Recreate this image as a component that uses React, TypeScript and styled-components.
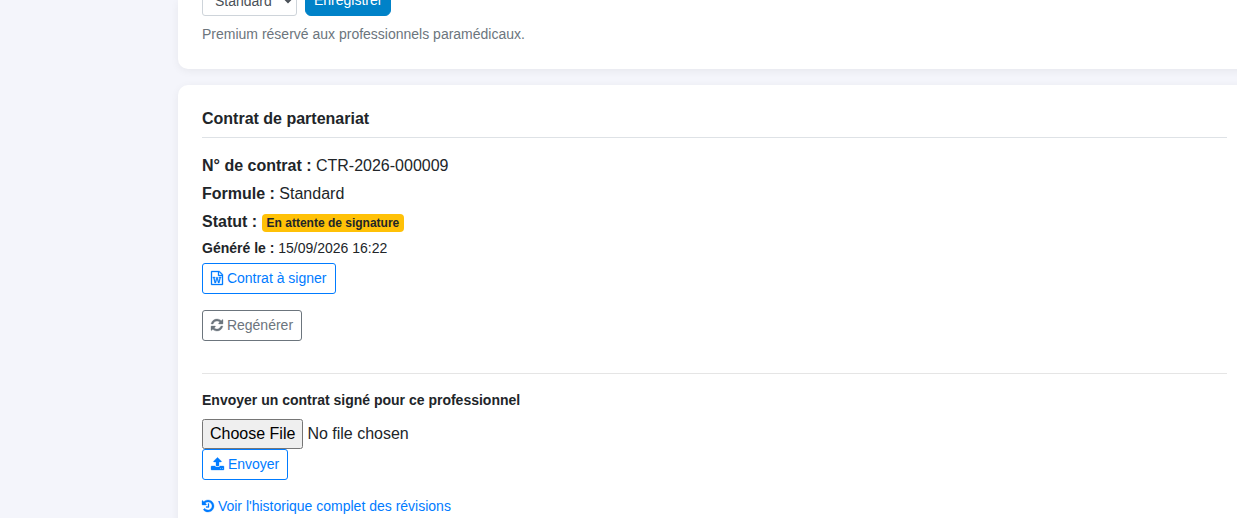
import React from 'react';
import styled, { createGlobalStyle, css } from 'styled-components';

const GlobalStyle = createGlobalStyle`
  *, *::before, *::after { box-sizing: border-box; }
  html { overflow: hidden; }
  body {
    margin: 0;
    background: #f4f5fb;
    color: #212529;
    font: 400 16px/24px "Liberation Sans", Arial, sans-serif;
  }
`;

const Page = styled.div`
  display: grid;
  grid-template-columns: 178px minmax(0, 1fr);
`;

const Main = styled.main`
  display: flex;
  flex-direction: column;
  gap: 16px;
  margin-right: -14px;
`;

const Card = styled.section<{ $continued?: boolean }>`
  padding: ${p => (p.$continued ? '0 24px 24px' : '24px')};
  border-radius: ${p => (p.$continued ? '0 0 10px 10px' : '10px')};
  background: #fff;
  box-shadow: 0 2px 8px rgba(0, 0, 0, 0.06);
`;

const PlanForm = styled.form`
  display: flex;
  gap: 8px;
  margin-top: -15px;
`;

const PlanSelect = styled.select`
  width: 95px;
  height: 31px;
  padding: 4px 8px;
  border: 1px solid #ced4da;
  border-radius: 3px;
  background: #fff;
  color: #495057;
  font: inherit;
  font-size: 14px;
`;

const SaveButton = styled.button`
  height: 31px;
  padding: 4px 8px;
  border: 1px solid #0082c8;
  border-radius: 6px;
  background: #0082c8;
  color: #fff;
  font: inherit;
  font-size: 14px;
  line-height: 21px;
`;

const Hint = styled.p`
  margin: 8px 0 0;
  color: #6c757d;
  font-size: 14px;
  line-height: 21px;
`;

const CardTitle = styled.h2`
  margin: 0 0 16px;
  padding-bottom: 8px;
  border-bottom: 1px solid #dee2e6;
  font-size: 16px;
  line-height: 20px;
`;

const Detail = styled.p<{ $small?: boolean }>`
  margin: 0 0 4px;
  ${p =>
    p.$small &&
    css`
      font-size: 14px;
      line-height: 21px;
    `}
`;

const Badge = styled.span`
  display: inline-block;
  padding: 3px 5px;
  border-radius: 4px;
  background: #ffc107;
  font-size: 12px;
  font-weight: 700;
  line-height: 12px;
  vertical-align: baseline;
`;

const Actions = styled.div`
  display: flex;
  flex-direction: column;
  align-items: flex-start;
  gap: 16px;
`;

const outline = css<{ $tone?: string }>`
  display: inline-block;
  height: 31px;
  padding: 4px 8px;
  border: 1px solid ${p => p.$tone || '#007bff'};
  border-radius: 3px;
  background: transparent;
  color: ${p => p.$tone || '#007bff'};
  font: inherit;
  font-size: 14px;
  line-height: 21px;
  text-decoration: none;
`;

const OutlineButton = styled.button<{ $tone?: string }>`
  ${outline}
`;

const OutlineLink = styled.a<{ $tone?: string }>`
  ${outline}
`;

const Divider = styled.hr`
  margin: 32px 0 16px;
  border: 0;
  border-top: 1px solid #e5e5e5;
`;

const UploadForm = styled.form`
  display: flex;
  flex-direction: column;
  align-items: flex-start;
`;

const UploadLabel = styled.label`
  margin-bottom: 8px;
  font-size: 14px;
  font-weight: 700;
  line-height: 21px;
`;

const FileInput = styled.input`
  max-width: 100%;
  margin: 0;
  color: inherit;
  font: inherit;

  &::file-selector-button {
    height: 30px;
    font: inherit;
  }
`;

const HistoryLink = styled.a`
  display: inline-block;
  margin-top: 16px;
  color: #007bff;
  font-size: 14px;
  line-height: 21px;
  text-decoration: none;
`;

const Glyph = styled.svg`
  height: 14px;
  overflow: visible;
  fill: currentColor;
  stroke: currentColor;
  stroke-width: 40;
  vertical-align: -2px;
`;

const icons = {
  word: {
    box: '128 0 1536 1792',
    width: 12,
    d: 'M1596 380q28 28 48 76t20 88v1152q0 40-28 68t-68 28h-1344q-40 0-68-28t-28-68v-1600q0-40 28-68t68-28h896q40 0 88 20t76 48zm-444-244v376h376q-10-29-22-41l-313-313q-12-12-41-22zm384 1528v-1024h-416q-40 0-68-28t-28-68v-416h-768v1536h1280zm-1175-896v107h70l164 661h159l128-485q7-20 10-46 2-16 2-24h4l3 24q1 3 3.5 20t5.5 26l128 485h159l164-661h70v-107h-300v107h90l-99 438q-5 20-7 46l-2 21h-4q0-3-.5-6.5t-1.5-8-1-6.5q-1-5-4-21t-5-25l-144-545h-114l-144 545q-2 9-4.5 24.5t-3.5 21.5l-4 21h-4l-2-21q-2-26-7-46l-99-438h90v-107h-300z',
  },
  refresh: {
    box: '128 0 1536 1792',
    width: 12,
    d: 'M1639 1056q0 5-1 7-64 268-268 434.5t-478 166.5q-146 0-282.5-55t-243.5-157l-129 129q-19 19-45 19t-45-19-19-45v-448q0-26 19-45t45-19h448q26 0 45 19t19 45-19 45l-137 137q71 66 161 102t187 36q134 0 250-65t186-179q11-17 53-117 8-23 30-23h192q13 0 22.5 9.5t9.5 22.5zm25-800v448q0 26-19 45t-45 19h-448q-26 0-45-19t-19-45 19-45l138-138q-148-137-349-137-134 0-250 65t-186 179q-11 17-53 117-8 23-30 23h-199q-13 0-22.5-9.5t-9.5-22.5v-7q65-268 270-434.5t480-166.5q146 0 284 55.5t245 156.5l130-129q19-19 45-19t45 19 19 45z',
  },
  upload: {
    box: '64 0 1664 1792',
    width: 13,
    d: 'M1344 1472q0-26-19-45t-45-19-45 19-19 45 19 45 45 19 45-19 19-45zm256 0q0-26-19-45t-45-19-45 19-19 45 19 45 45 19 45-19 19-45zm128-224v320q0 40-28 68t-68 28h-1472q-40 0-68-28t-28-68v-320q0-40 28-68t68-28h427q21 56 70.5 92t110.5 36h256q61 0 110.5-36t70.5-92h427q40 0 68 28t28 68zm-325-648q-17 40-59 40h-256v448q0 26-19 45t-45 19h-256q-26 0-45-19t-19-45v-448h-256q-42 0-59-40-17-39 14-69l448-448q18-19 45-19t45 19l448 448q31 30 14 69z',
  },
  history: {
    box: '128 0 1536 1792',
    width: 12,
    d: 'M1664 896q0 156-61 298t-164 245-245 164-298 61q-172 0-327-72.5t-264-204.5q-7-10-6.5-22.5t8.5-20.5l137-138q10-9 25-9 16 2 23 12 73 95 179 147t225 52q104 0 198.5-40.5t163.5-109.5 109.5-163.5 40.5-198.5-40.5-198.5-109.5-163.5-163.5-109.5-198.5-40.5q-98 0-188 35.5t-160 101.5l137 138q31 30 14 69-17 40-59 40h-448q-26 0-45-19t-19-45v-448q0-42 40-59 39-17 69 14l130 129q107-101 244.5-156.5t284.5-55.5q156 0 298 61t245 164 164 245 61 298zm-640-288v448q0 14-9 23t-23 9h-320q-14 0-23-9t-9-23v-64q0-14 9-23t23-9h224v-352q0-14 9-23t23-9h64q14 0 23 9t9 23z',
  },
};

function Icon({ name }: { name: keyof typeof icons }) {
  const icon = icons[name];
  return (
    <Glyph viewBox={icon.box} width={icon.width} aria-hidden="true">
      <path d={icon.d} />
    </Glyph>
  );
}

export default function App() {
  return (
    <>
      <GlobalStyle />
      <Page>
        <div />
        <Main>
          <Card $continued>
            <PlanForm onSubmit={e => e.preventDefault()}>
              <PlanSelect aria-label="Formule" defaultValue="Standard">
                <option>Standard</option>
                <option>Premium</option>
              </PlanSelect>
              <SaveButton type="submit">Enregistrer</SaveButton>
            </PlanForm>
            <Hint>Premium réservé aux professionnels paramédicaux.</Hint>
          </Card>

          <Card>
            <CardTitle>Contrat de partenariat</CardTitle>
            <Detail>
              <strong>N° de contrat :</strong> CTR-2026-000009
            </Detail>
            <Detail>
              <strong>Formule :</strong> Standard
            </Detail>
            <Detail>
              <strong>Statut :</strong> <Badge>En attente de signature</Badge>
            </Detail>
            <Detail $small>
              <strong>Généré le :</strong> 15/09/2026 16:22
            </Detail>
            <Actions>
              <OutlineLink href="#contrat">
                <Icon name="word" /> Contrat à signer
              </OutlineLink>
              <OutlineButton type="button" $tone="#6c757d">
                <Icon name="refresh" /> Regénérer
              </OutlineButton>
            </Actions>
            <Divider />
            <UploadForm onSubmit={e => e.preventDefault()}>
              <UploadLabel htmlFor="signed-contract">
                Envoyer un contrat signé pour ce professionnel
              </UploadLabel>
              <FileInput id="signed-contract" type="file" />
              <OutlineButton type="submit">
                <Icon name="upload" /> Envoyer
              </OutlineButton>
            </UploadForm>
            <HistoryLink href="#historique">
              <Icon name="history" /> Voir l'historique complet des révisions
            </HistoryLink>
          </Card>
        </Main>
      </Page>
    </>
  );
}
